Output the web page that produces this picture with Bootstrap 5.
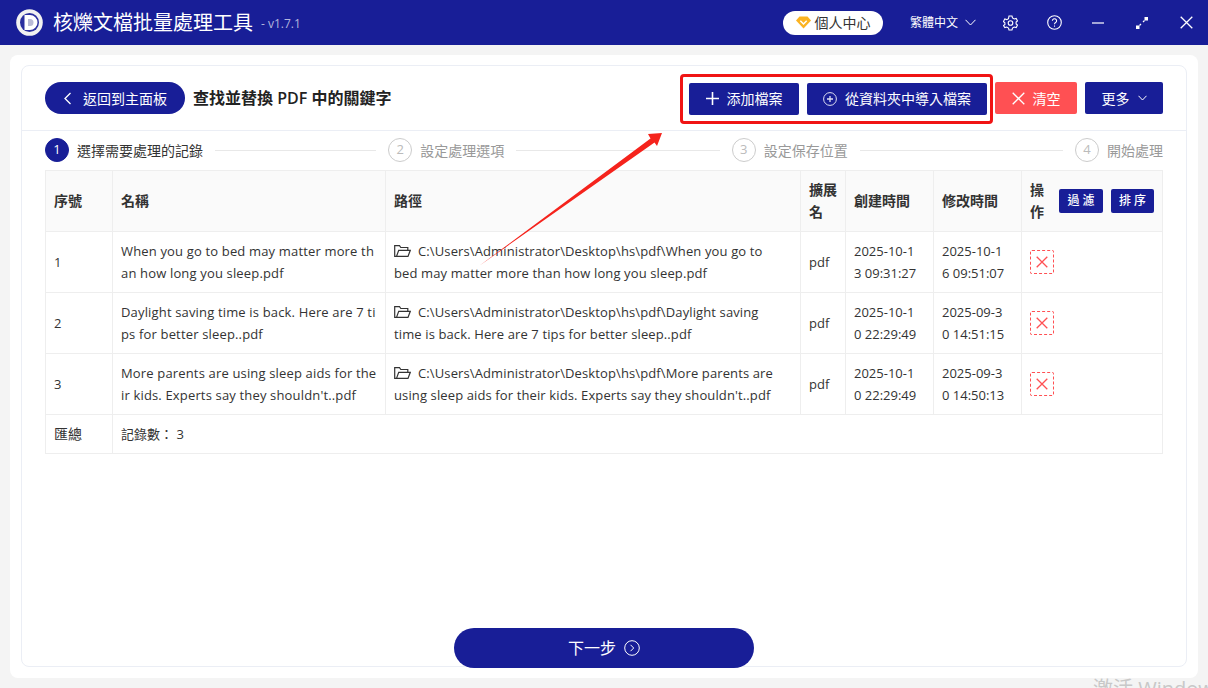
<!DOCTYPE html>
<html lang="zh-Hant">
<head>
<meta charset="utf-8">
<title>核爍文檔批量處理工具</title>
<link href="https://cdn.jsdelivr.net/npm/bootstrap@5.3.0/dist/css/bootstrap.min.css" rel="stylesheet">
<style>
html,body{height:688px;overflow:hidden}
body{background:#f4f4f4;font-family:"Open Sans","Noto Sans CJK TC",sans-serif;font-size:13px;color:#333;position:relative}
.app-head{height:45px;background:#181e97;color:#fff;padding:0 10px 0 16px}
.app-logo{width:27px;height:27px;margin-right:10px}
.app-name{font-size:20px;line-height:45px;white-space:nowrap}
.app-ver{font-size:12px;color:#b4b6dd;margin-left:8px;margin-top:3px}
.user-pill{width:100px;height:24px;background:#fff;border-radius:12px;color:#333;font-size:14px;margin-right:27px;gap:4px}
.lang-pick{font-size:12px;width:67px;gap:7px;margin-right:11px;white-space:nowrap}
.head-ico{width:44px;display:flex;justify-content:center}
.head-ico:last-child{width:24px;margin-left:10px}
.outer-panel{height:623px;margin:10px 10px 0;background:#fff;border-radius:8px;padding:10px 11px}
.inner-panel{height:602px;border:1px solid #ebeef5;border-radius:8px;display:flex;flex-direction:column}
.tool-row{height:65px;border-bottom:1px solid #ebeef5;padding:0 23px}
.back-btn{width:140px;height:32px;border-radius:16px;background:#181e97;color:#fff;font-size:14px;border:0;padding:0;gap:11px}
.page-title{font-size:16px;font-weight:600;color:#222;margin:1px 0 0 8px;white-space:nowrap}
.hi-box{border:3px solid #f01414;border-radius:4px;padding:5px 3px 5px 6px;gap:8px;margin-right:2px;height:50px;margin-top:1px}
.act-btn{height:32px;border:0;border-radius:2px;background:#181e97;color:#fff;font-size:14px;padding:0;gap:8px;white-space:nowrap}
.w-add{width:110px}.w-imp{width:180px}.w-clear{width:82px;background:#ff5053;margin-right:8px}.w-more{width:78px}
.step-row{height:39px;padding:0 23px 1px}
.step-item{flex:1 1 0;min-width:0}
.step-item.end{flex:none}
.step-dot{width:24px;height:24px;border-radius:50%;border:1px solid #ccc;color:#bbb;font-size:13px;flex:none;margin-right:8px}
.step-dot.on{background:#181e97;border-color:#181e97;color:#fff}
.step-txt{font-size:14px;color:#999;white-space:nowrap}
.step-txt.on{color:#333}
.step-line{flex:1;height:1px;background:#e8e8e8;margin:0 12px}
.tbl-wrap{padding:0 23px}
.rec-table{table-layout:fixed;width:1118px;margin:0;border-color:#eee;--bs-table-color:#333;font-size:13px;line-height:22px}
.rec-table th,.rec-table td{padding:8px 8px;vertical-align:middle;border-color:#eee}
.rec-table th{background:#fafafa;font-weight:600;color:#333;height:61px;font-size:14px}
.rec-table tbody td{height:61px}
.rec-table tfoot td{height:39px;padding-top:0;padding-bottom:0}
.rec-table tfoot .sum-lbl{font-size:14px}
.c-a{width:67px}.c-b{width:273px}.c-c{width:415px}.c-d{width:45px}.c-e{width:88px}.c-f{width:88px}
.brk{word-break:break-all}
.rec-table td.nm{letter-spacing:.16px}
.rec-table td.pth{letter-spacing:.12px;padding-right:12px}
.rec-table td.dt{padding-right:12px}
.mini-btn{width:44px;height:24px;background:#181e97;color:#fff;font-size:12px;font-weight:500;border:0;border-radius:2px;padding:0 0 0 3px;letter-spacing:3px}
.mini-w2{width:43px}
.op-head{width:16px;line-height:22px}
.del-box{width:24px;height:24px;border:1px dashed #ff5053;border-radius:2px}
.folder{margin:0 7px 3px 0;vertical-align:middle}
.next-wrap{margin-top:auto;margin-bottom:-2px}
.next-btn{width:300px;height:40px;background:#181e97;color:#fff;border:0;border-radius:20px;font-size:16px;gap:8px}
.arrow-over{position:absolute;left:0;top:0;pointer-events:none}
.win-mark{position:absolute;left:1093px;top:677px;font-size:20px;color:#c8c8c8;white-space:nowrap;line-height:24px}
</style>
</head>
<body>
<header class="app-head d-flex align-items-center">
  <svg class="app-logo" viewBox="0 0 27 27"><circle cx="13.5" cy="13.5" r="13.300" fill="#f1f1f1"/><circle cx="13.5" cy="13.5" r="9.500" fill="#2a2f9f"/><path d="M8.500 6h5.500a7.500 7.500 0 0 1 0 15H8.500z" fill="#fff"/><path d="M12 10h2a3.500 3.500 0 0 1 0 7h-2z" fill="#b9bad6"/></svg>
  <span class="app-name">核爍文檔批量處理工具</span>
  <span class="app-ver">- v1.7.1</span>
  <div class="ms-auto d-flex align-items-center">
    <div class="user-pill d-flex align-items-center justify-content-center">
      <svg width="15" height="13" viewBox="0 0 15 13"><path d="M3.5 .5h8L15 4.5 7.5 12.5 0 4.5z" fill="#fbb321"/><path d="M4.3 4.8 7.5 8l3.2-3.2" fill="none" stroke="#fff" stroke-width="1.5"/></svg>
      <span>個人中心</span>
    </div>
    <div class="lang-pick d-flex align-items-center">繁體中文
      <svg width="11" height="7" viewBox="0 0 11 7"><path d="M.5 .8 5.5 6l5-5.2" fill="none" stroke="#fff"/></svg>
    </div>
    <div class="head-ico"><svg width="15" height="16" viewBox="0 0 15 16" fill="none" stroke="#fff" stroke-width="1.1"><path d="M6 1h3l.5 2 1.7 1 2-.6 1.3 2.6-1.4 1.1v1.800l1.4 1.100-1.300 2.600-2-.6-1.700 1-.5 2H6l-.5-2-1.700-1-2 .6L.5 10.600l1.400-1.100V7.700L.5 6.600 1.800 4l2 .6 1.700-1z"/><circle cx="7.500" cy="8" r="2.300"/></svg></div>
    <div class="head-ico"><svg width="15" height="15" viewBox="0 0 15 15" fill="none" stroke="#fff" stroke-width="1.100"><circle cx="7.500" cy="7.500" r="6.800"/><path d="M5.400 5.800a2.100 2.100 0 1 1 3.200 1.800c-.7.4-1.100.8-1.100 1.700"/><path d="M7.500 10.500v1.200"/></svg></div>
    <div class="head-ico"><svg width="12" height="2" viewBox="0 0 12 2"><path d="M0 1h12" stroke="#c9cae8" stroke-width="1.600"/></svg></div>
    <div class="head-ico"><svg width="12" height="12" viewBox="0 0 12 12"><path d="M3.500 8.500l1.500-1.500M7 5l1.500-1.500" stroke="#fff" stroke-width="1.200"/><path d="M8.500 0H12v3.500H8.500zM0 8.500h3.500V12H0z" fill="#fff"/></svg></div>
    <div class="head-ico"><svg width="13" height="13" viewBox="0 0 13 13"><path d="M.7.700l11.600 11.600M12.300.700.7 12.300" stroke="#fff" stroke-width="1.300"/></svg></div>
  </div>
</header>

<main class="outer-panel">
  <div class="inner-panel">
    <div class="tool-row d-flex align-items-center">
      <button class="back-btn btn d-flex align-items-center justify-content-center">
        <svg width="9" height="13" viewBox="0 0 9 13"><path d="M7.500 1 2 6.500 7.500 12" fill="none" stroke="#fff" stroke-width="1.300"/></svg>
        <span>返回到主面板</span>
      </button>
      <h1 class="page-title">查找並替換 PDF 中的關鍵字</h1>
      <div class="ms-auto d-flex align-items-center">
        <div class="hi-box d-flex align-items-center">
          <button class="act-btn btn w-add d-flex align-items-center justify-content-center"><svg width="13" height="13" viewBox="0 0 13 13"><path d="M6.500 0v13M0 6.500h13" stroke="#fff" stroke-width="1.600"/></svg><span>添加檔案</span></button>
          <button class="act-btn btn w-imp d-flex align-items-center justify-content-center"><svg width="14" height="14" viewBox="0 0 14 14" fill="none" stroke="#dfe0f2"><circle cx="7" cy="7" r="6.400"/><path d="M7 4v6M4 7h6" stroke-width="1.300"/></svg><span>從資料夾中導入檔案</span></button>
        </div>
        <button class="act-btn btn w-clear d-flex align-items-center justify-content-center"><svg width="13" height="13" viewBox="0 0 13 13"><path d="M.7.700l11.600 11.600M12.300.700.7 12.300" stroke="#fff" stroke-width="1.300"/></svg><span>清空</span></button>
        <button class="act-btn btn w-more d-flex align-items-center justify-content-center"><span>更多</span><svg width="9" height="6" viewBox="0 0 9 6"><path d="M.5.800 4.500 5l4-4.200" fill="none" stroke="#fff"/></svg></button>
      </div>
    </div>

    <div class="step-row d-flex align-items-center">
      <div class="step-item d-flex align-items-center"><span class="step-dot on d-flex align-items-center justify-content-center">1</span><span class="step-txt on">選擇需要處理的記錄</span><span class="step-line"></span></div>
      <div class="step-item d-flex align-items-center"><span class="step-dot d-flex align-items-center justify-content-center">2</span><span class="step-txt">設定處理選項</span><span class="step-line"></span></div>
      <div class="step-item d-flex align-items-center"><span class="step-dot d-flex align-items-center justify-content-center">3</span><span class="step-txt">設定保存位置</span><span class="step-line"></span></div>
      <div class="step-item end d-flex align-items-center"><span class="step-dot d-flex align-items-center justify-content-center">4</span><span class="step-txt">開始處理</span></div>
    </div>

    <div class="tbl-wrap">
      <table class="table table-bordered rec-table">
        <colgroup><col class="c-a"><col class="c-b"><col class="c-c"><col class="c-d"><col class="c-e"><col class="c-f"><col></colgroup>
        <thead>
          <tr>
            <th>序號</th><th>名稱</th><th>路徑</th><th>擴展名</th><th>創建時間</th><th>修改時間</th>
            <th><div class="d-flex align-items-center"><span class="op-head">操作</span><button class="mini-btn btn ms-auto me-2">過濾</button><button class="mini-btn mini-w2 btn">排序</button></div></th>
          </tr>
        </thead>
        <tbody>
          <tr>
            <td>1</td>
            <td class="brk nm">When you go to bed may matter more than how long you sleep.pdf</td>
            <td class="pth"><svg class="folder" width="17" height="12" viewBox="0 0 17 12" fill="none" stroke="#333" stroke-width="1.200"><path d="M2.500 11.400H.7V.7h4.800l1.300 1.800h7v2.800"/><path d="M2.500 11.400 4.700 5.300h11.600l-2.300 6.100z"/></svg>C:\Users\Administrator\Desktop\hs\pdf\When you go to bed may matter more than how long you sleep.pdf</td>
            <td>pdf</td>
            <td class="brk dt">2025-10-13 09:31:27</td>
            <td class="brk dt">2025-10-16 09:51:07</td>
            <td><div class="del-box d-flex align-items-center justify-content-center"><svg width="12" height="12" viewBox="0 0 12 12"><path d="M.7.700l10.600 10.600M11.300.700.7 11.300" stroke="#ff5053" stroke-width="1.300"/></svg></div></td>
          </tr>
          <tr>
            <td>2</td>
            <td class="brk nm">Daylight saving time is back. Here are 7 tips for better sleep..pdf</td>
            <td class="pth"><svg class="folder" width="17" height="12" viewBox="0 0 17 12" fill="none" stroke="#333" stroke-width="1.200"><path d="M2.500 11.400H.7V.7h4.800l1.300 1.800h7v2.800"/><path d="M2.500 11.400 4.700 5.300h11.600l-2.300 6.100z"/></svg>C:\Users\Administrator\Desktop\hs\pdf\Daylight saving time is back. Here are 7 tips for better sleep..pdf</td>
            <td>pdf</td>
            <td class="brk dt">2025-10-10 22:29:49</td>
            <td class="brk dt">2025-09-30 14:51:15</td>
            <td><div class="del-box d-flex align-items-center justify-content-center"><svg width="12" height="12" viewBox="0 0 12 12"><path d="M.7.700l10.600 10.600M11.300.700.7 11.300" stroke="#ff5053" stroke-width="1.300"/></svg></div></td>
          </tr>
          <tr>
            <td>3</td>
            <td class="brk nm">More parents are using sleep aids for their kids. Experts say they shouldn't..pdf</td>
            <td class="pth"><svg class="folder" width="17" height="12" viewBox="0 0 17 12" fill="none" stroke="#333" stroke-width="1.200"><path d="M2.500 11.400H.7V.7h4.800l1.300 1.800h7v2.800"/><path d="M2.500 11.400 4.700 5.300h11.600l-2.300 6.100z"/></svg>C:\Users\Administrator\Desktop\hs\pdf\More parents are using sleep aids for their kids. Experts say they shouldn't..pdf</td>
            <td>pdf</td>
            <td class="brk dt">2025-10-10 22:29:49</td>
            <td class="brk dt">2025-09-30 14:50:13</td>
            <td><div class="del-box d-flex align-items-center justify-content-center"><svg width="12" height="12" viewBox="0 0 12 12"><path d="M.7.700l10.600 10.600M11.300.700.7 11.300" stroke="#ff5053" stroke-width="1.300"/></svg></div></td>
          </tr>
        </tbody>
        <tfoot>
          <tr><td class="sum-lbl">匯總</td><td colspan="6">記錄數：&nbsp;3</td></tr>
        </tfoot>
      </table>
    </div>

    <div class="next-wrap d-flex justify-content-center">
      <button class="next-btn btn d-flex align-items-center justify-content-center"><span>下一步</span><svg width="16" height="16" viewBox="0 0 16 16" fill="none" stroke="#fff"><circle cx="8" cy="8" r="7.300"/><path d="M6.500 4.800 9.700 8l-3.200 3.200"/></svg></button>
    </div>
  </div>
</main>

<svg class="arrow-over" width="1208" height="688" viewBox="0 0 1208 688"><path d="M479 266 650.500 138.500 648 134 662 133 657 146 654.500 142.500z" fill="#f5231c"/></svg>
<div class="win-mark">激活 Windows</div>
<script src="https://cdn.jsdelivr.net/npm/bootstrap@5.3.0/dist/js/bootstrap.bundle.min.js"></script>
</body>
</html>
